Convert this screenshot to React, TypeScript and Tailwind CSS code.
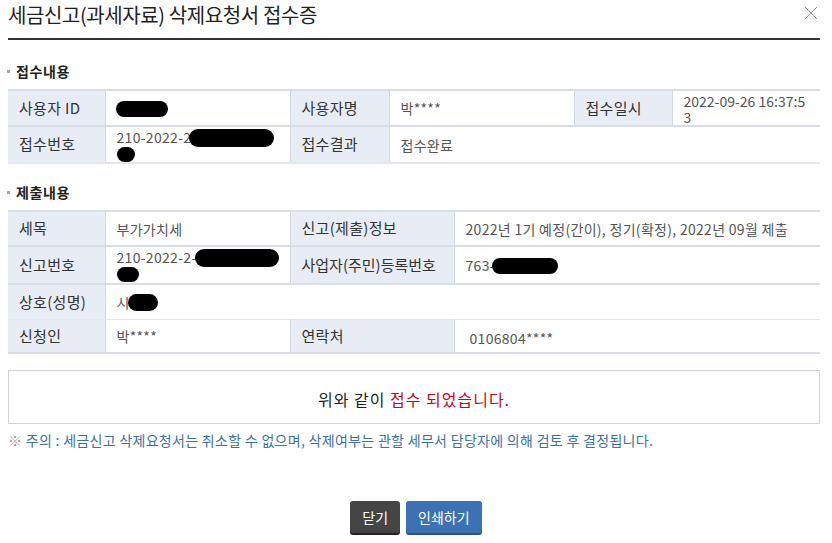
import React from "react";

const font = { fontFamily: '"Noto Sans CJK KR", "Noto Sans", sans-serif' };

function Blob({ w, h = 16 }: { w: number; h?: number }) {
  return <span className="inline-block rounded-full bg-black align-middle shrink-0" style={{ width: w, height: h }} />;
}

function Th({ children, className = "" }: { children: React.ReactNode; className?: string }) {
  return (
    <td className={`bg-[#e8ecf4] px-[11px] text-[15px] text-[#333] tracking-[0.3px] border-x border-[#d3d9e3] ${className}`}>
      {children}
    </td>
  );
}

function Td({ children, className = "", colSpan }: { children?: React.ReactNode; className?: string; colSpan?: number }) {
  return (
    <td colSpan={colSpan} className={`px-[11px] text-[14px] text-[#555] tracking-[0.3px] leading-[16px] ${className}`}>
      {children}
    </td>
  );
}

function SectionTitle({ title }: { title: string }) {
  return (
    <div className="flex items-center gap-[6px] pl-[7px] h-[20px]">
      <span className="w-[3px] h-[3px] bg-[#aaa]" />
      <span className="text-[14px] font-bold text-[#222] tracking-[0.6px]">{title}</span>
    </div>
  );
}

export default function App() {
  return (
    <div className="w-[832px] h-[543px] bg-white relative overflow-hidden" style={font}>
      {/* header */}
      <div className="px-[8px]">
        <div className="h-[38px] flex items-center">
          <h1 className="text-[20px] text-[#222] tracking-[-0.4px] leading-none mt-[-9px]">세금신고(과세자료) 삭제요청서 접수증</h1>
        </div>
        <div className="w-[812px] h-[2px] bg-[#333]" />
      </div>
      <button className="absolute right-[13px] top-[5px] w-[16px] h-[16px] text-[#999]">
        <svg viewBox="0 0 16 16" width="16" height="16" stroke="currentColor" strokeWidth="1" fill="none">
          <path d="M2 2L14 14M14 2L2 14" />
        </svg>
      </button>

      {/* 접수내용 */}
      <div className="mt-[21px]">
        <SectionTitle title="접수내용" />
      </div>
      <div className="px-[8px] mt-[8px]">
        <table className="w-[812px] table-fixed border-collapse border-t-2 border-[#d9dee6]">
          <colgroup>
            <col className="w-[97px]" />
            <col className="w-[185px]" />
            <col className="w-[99px]" />
            <col className="w-[185px]" />
            <col className="w-[98px]" />
            <col className="w-[148px]" />
          </colgroup>
          <tbody>
            <tr className="h-[36px] border-b-2 border-[#d9dee6]">
              <Th className="border-l-0">사용자 ID</Th>
              <Td><span className="ml-[-1px]"><Blob w={52} /></span></Td>
              <Th>사용자명</Th>
              <Td>박****</Td>
              <Th>접수일시</Th>
              <Td className="align-top pt-[2px] tracking-[0px]">
                <div className="h-[16px]">2022-09-26 16:37:5</div>
                <div className="h-[16px]">3</div>
              </Td>
            </tr>
            <tr className="h-[36px] border-b-2 border-[#e4e8ee]">
              <Th className="border-l-0">접수번호</Th>
              <Td className="align-top pt-[1px]">
                <div className="flex items-center h-[18px] whitespace-nowrap">210-2022-2<span className="ml-[-2px]"><Blob w={85} h={18} /></span></div>
                <div className="h-[16px] flex items-center"><Blob w={18} h={15} /></div>
              </Td>
              <Th>접수결과</Th>
              <Td colSpan={3} className="border-l-0">접수완료</Td>
            </tr>
          </tbody>
        </table>
      </div>

      {/* 제출내용 */}
      <div className="mt-[18px]">
        <SectionTitle title="제출내용" />
      </div>
      <div className="px-[8px] mt-[8px]">
        <table className="w-[812px] table-fixed border-collapse border-t-2 border-[#d9dee6]">
          <colgroup>
            <col className="w-[97px]" />
            <col className="w-[185px]" />
            <col className="w-[164px]" />
            <col className="w-[366px]" />
          </colgroup>
          <tbody>
            <tr className="h-[35px] border-b-2 border-[#d9dee6]">
              <Th className="border-l-0">세목</Th>
              <Td>부가가치세</Td>
              <Th>신고(제출)정보</Th>
              <Td className="tracking-[0.1px]">2022년 1기 예정(간이), 정기(확정), 2022년 09월 제출</Td>
            </tr>
            <tr className="h-[38px] border-b-2 border-[#d9dee6]">
              <Th className="border-l-0">신고번호</Th>
              <Td className="align-top pt-[1px]">
                <div className="flex items-center h-[18px] whitespace-nowrap">210-2022-2-<span className="ml-[-2px]"><Blob w={84} h={18} /></span></div>
                <div className="h-[16px] flex items-center"><Blob w={22} h={15} /></div>
              </Td>
              <Th className="tracking-[0px]">사업자(주민)등록번호</Th>
              <Td><span className="inline-flex items-center whitespace-nowrap">763-<span className="ml-[-3px]"><Blob w={66} /></span></span></Td>
            </tr>
            <tr className="h-[35px] border-b border-[#e4e8ee]">
              <Th className="border-l-0">상호(성명)</Th>
              <Td colSpan={3}><span className="inline-flex items-center">시<span className="ml-[-2px]"><Blob w={30} h={17} /></span></span></Td>
            </tr>
            <tr className="h-[34px] border-t border-b-2 border-[#d9dee6]">
              <Th className="border-l-0">신청인</Th>
              <Td>박****</Td>
              <Th>연락처</Th>
              <Td className="pl-[15px] pt-[4px]">0106804****</Td>
            </tr>
          </tbody>
        </table>
      </div>

      {/* message */}
      <div className="ml-[8px] w-[812px] mt-[16px] h-[54px] border border-[#d4d4d4] flex items-center justify-center text-[16px] tracking-[1px] pt-[3px]">
        <span className="text-[#222]">위와 같이&nbsp;</span>
        <span className="text-[#d0021b]">접수 되었습니다.</span>
      </div>

      <p className="px-[8px] mt-[6px] text-[14px] text-[#3b72a8] tracking-[0.3px]">
        <span className="text-[#999]">※</span> 주의 : 세금신고 삭제요청서는 취소할 수 없으며, 삭제여부는 관할 세무서 담당자에 의해 검토 후 결정됩니다.
      </p>

      {/* buttons */}
      <div className="flex justify-center gap-[6px] mt-[50px]">
        <button className="h-[32px] px-[12px] rounded-[3px] bg-[#454545] text-white text-[14px] shadow-[0_2px_0_#222]">닫기</button>
        <button className="h-[32px] px-[12px] rounded-[3px] bg-[#3c72b4] text-white text-[14px] shadow-[0_2px_0_#2a5488]">인쇄하기</button>
      </div>
    </div>
  );
}
